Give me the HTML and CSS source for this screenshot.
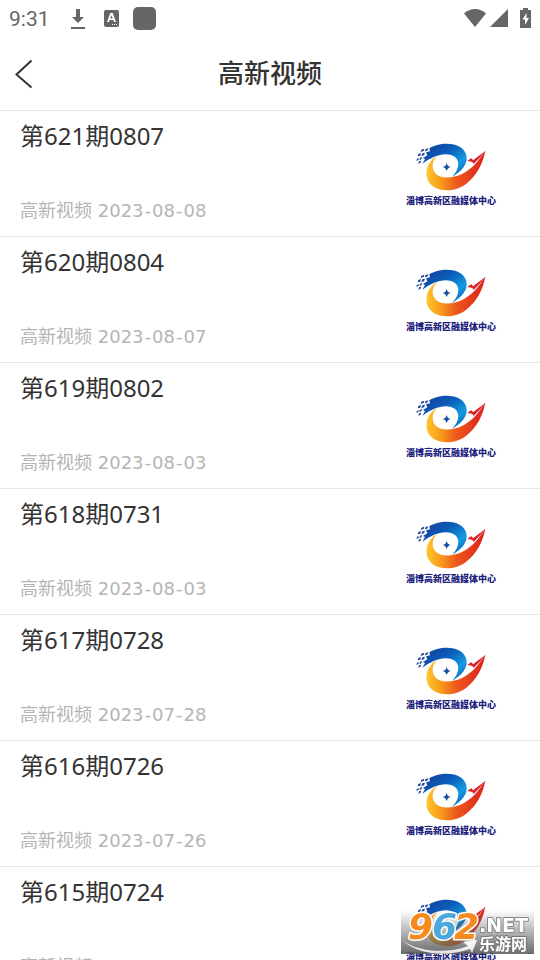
FILE: index.html
```
<!DOCTYPE html>
<html lang="zh-CN">
<head>
  <meta charset="UTF-8">
  <meta name="viewport" content="width=device-width, initial-scale=1.0">
  <title>高新视频</title>
  <link rel="stylesheet" href="styles.css">
</head>
<body>
  <!-- Logo shared by every row -->
  <svg class="defs" aria-hidden="true">
    <defs>
      <linearGradient id="blue" x1="0" y1="0" x2="1" y2="1">
        <stop offset="0" stop-color="#163c9c"/>
        <stop offset=".4" stop-color="#0b5cb8"/>
        <stop offset=".7" stop-color="#129be2"/>
        <stop offset="1" stop-color="#0a4fae"/>
      </linearGradient>
      <linearGradient id="fire" x1="0" y1="0" x2="1" y2="0">
        <stop offset="0" stop-color="#fdc62c"/>
        <stop offset=".25" stop-color="#f99a1c"/>
        <stop offset=".5" stop-color="#ee5a1c"/>
        <stop offset="1" stop-color="#dc1f1c"/>
      </linearGradient>
      <symbol id="logo" viewBox="20 15 210 156">
        <path fill="url(#blue)" d="M60 31C82 16 128 11 152 27C183 47 180 87 129 116C148 96 153 73 138 58C118 40 74 48 39 78L47 63L41 60L54 52L50 43L62 40Z"/>
        <path fill="url(#fire)" d="M84 54C67 68 65 94 80 108C98 124 132 120 158 108C188 94 211 66 228 37C221 78 203 112 170 138C136 164 79 164 59 133C42 104 56 68 84 54Z"/>
        <path fill="#d8232a" d="M174 70Q180 62 187 61L191 67Q208 54 227 40Q212 60 193 78Q190 68 174 70Z"/>
        <path fill="#1c4fa3" d="M112 74Q114 85 124 87Q114 89 112 100Q110 89 100 87Q110 85 112 74Z"/>
        <path fill="#24469c" d="M36 35l9-3-2 7-9 3zM49 33l8-2-3 7-8 2zM27 48l8-3-2 8-8 2zM39 46l8-2-3 8-8 2zM23 62l6-1-2 6-6 1zM32 59l7-2-3 7-6 2zM29 70l7-2-3 7-6 2z"/>
      </symbol>
      <linearGradient id="shade" x1="0" y1="0" x2="0" y2="1">
        <stop offset="0" stop-color="#fff"/>
        <stop offset="1" stop-color="#e2e2e2"/>
      </linearGradient>
    </defs>
  </svg>

  <div class="app">
    <div class="status">
      <span class="clock">9:31</span>
      <svg class="ic-download" viewBox="0 0 16 22"><path d="M6 1h4v8h4l-6 6-6-6h4zM1 19h14v2H1z"/></svg>
      <svg class="ic-lang" viewBox="0 0 15 17"><rect width="15" height="17" rx="2"/><path fill="#fff" d="M6.300 3h2.400L12 12h-2l-.6-2H5.600L5 12H3zM7.500 5.300L6.200 8.500h2.600z"/><path fill="#fff" d="M8 14h1v1H8zM10 14h1v1h-1zM12 14h1v1h-1z"/></svg>
      <span class="app-dot"></span>
      <span class="signals">
        <svg class="ic-wifi" viewBox="0 0 22 18"><path d="M11 18L0 4.500C6-1.500 16-1.500 22 4.500z"/></svg>
        <svg class="ic-cell" viewBox="0 0 18 18"><path d="M18 0v18H0z"/></svg>
        <svg class="ic-battery" viewBox="0 0 11 20"><path d="M3 0h5v2h3v18H0V2h3z"/><path fill="#fff" d="M6.500 5L2.500 11.500H5V17l4-7H6.500z"/></svg>
      </span>
    </div>

    <header class="topbar">
      <button class="back" type="button" aria-label="返回">
        <svg viewBox="0 0 18 30"><path d="M16.500 1.500L1.500 15.500L16.500 28.500"/></svg>
      </button>
      <h1>高新视频</h1>
    </header>

    <main class="list">
      <a class="item" href="#">
        <div class="info">
          <h2>第621期0807</h2>
          <p>高新视频 <time>2023<span>-</span>08<span>-</span>08</time></p>
        </div>
        <div class="thumb"><svg><use href="#logo"/></svg><span>淄博高新区融媒体中心</span></div>
      </a>
      <a class="item" href="#">
        <div class="info">
          <h2>第620期0804</h2>
          <p>高新视频 <time>2023<span>-</span>08<span>-</span>07</time></p>
        </div>
        <div class="thumb"><svg><use href="#logo"/></svg><span>淄博高新区融媒体中心</span></div>
      </a>
      <a class="item" href="#">
        <div class="info">
          <h2>第619期0802</h2>
          <p>高新视频 <time>2023<span>-</span>08<span>-</span>03</time></p>
        </div>
        <div class="thumb"><svg><use href="#logo"/></svg><span>淄博高新区融媒体中心</span></div>
      </a>
      <a class="item" href="#">
        <div class="info">
          <h2>第618期0731</h2>
          <p>高新视频 <time>2023<span>-</span>08<span>-</span>03</time></p>
        </div>
        <div class="thumb"><svg><use href="#logo"/></svg><span>淄博高新区融媒体中心</span></div>
      </a>
      <a class="item" href="#">
        <div class="info">
          <h2>第617期0728</h2>
          <p>高新视频 <time>2023<span>-</span>07<span>-</span>28</time></p>
        </div>
        <div class="thumb"><svg><use href="#logo"/></svg><span>淄博高新区融媒体中心</span></div>
      </a>
      <a class="item" href="#">
        <div class="info">
          <h2>第616期0726</h2>
          <p>高新视频 <time>2023<span>-</span>07<span>-</span>26</time></p>
        </div>
        <div class="thumb"><svg><use href="#logo"/></svg><span>淄博高新区融媒体中心</span></div>
      </a>
      <a class="item" href="#">
        <div class="info">
          <h2>第615期0724</h2>
          <p>高新视频 <time>2023<span>-</span>07<span>-</span>24</time></p>
        </div>
        <div class="thumb"><svg><use href="#logo"/></svg><span>淄博高新区融媒体中心</span></div>
      </a>
    </main>
  </div>

  <!-- Site mark over the list -->
  <svg class="mark" viewBox="0 0 133 44" role="img" aria-label="962.NET 乐游网">
    <path class="swoosh" d="M2 31C18 42 46 44 67 36L62 32L76 30L71 43L69 39C46 47 18 45 2 31Z"/>
    <g class="digits">
      <text x="7" y="29" fill="#f58a1f">9</text>
      <text x="31" y="29" fill="#49a9dc">6</text>
      <text x="53" y="29" fill="#f58a1f">2</text>
    </g>
    <text class="net" x="78" y="22">.NET</text>
    <text class="cn" x="78" y="40">乐游网</text>
  </svg>
</body>
</html>
```
FILE: styles.css
```
* {
  box-sizing: border-box;
}

body {
  margin: 0;
  background: #fff;
  color: #333;
  font-family: "Noto Sans", "Noto Sans CJK SC", sans-serif;
}

h1, h2, p {
  margin: 0;
  font-weight: normal;
}

.defs {
  position: absolute;
  width: 0;
  height: 0;
}

.app {
  display: flex;
  flex-direction: column;
  height: 100vh;
}

/* Status bar */
.status {
  display: flex;
  align-items: center;
  height: 37px;
  padding: 0 9px;
  color: #666;
  fill: #666;
}

.clock {
  width: 61px;
  font: 21px/24px Roboto, sans-serif;
}

.ic-download {
  width: 16px;
  height: 22px;
}

.ic-lang {
  width: 15px;
  height: 17px;
  margin-left: 18px;
}

.app-dot {
  width: 23px;
  height: 23px;
  margin-left: 14px;
  border-radius: 5px;
  background: #666;
}

.signals {
  display: flex;
  align-items: center;
  margin-left: auto;
  padding-bottom: 2px;
}

.ic-wifi {
  width: 22px;
  height: 18px;
}

.ic-cell {
  width: 18px;
  height: 18px;
  margin: 0 12px 0 4px;
}

.ic-battery {
  width: 11px;
  height: 20px;
}

/* Title bar */
.topbar {
  display: grid;
  grid-template-columns: 48px 1fr 48px;
  align-items: center;
  height: 73px;
}

.back {
  display: flex;
  padding: 0 0 0 15px;
  border: 0;
  background: none;
  cursor: pointer;
}

.back svg {
  width: 18px;
  height: 30px;
  fill: none;
  stroke: #333;
  stroke-width: 2;
}

.topbar h1 {
  padding-bottom: 4px;
  font: 500 26px/36px "Noto Sans CJK SC", sans-serif;
  text-align: center;
}

/* List */
.list {
  flex: 1;
  overflow-y: auto;
  scrollbar-width: none;
}

.item {
  display: flex;
  justify-content: space-between;
  height: 126px;
  padding: 8px 44px 10px 20px;
  border-top: 1px solid #e6e6e6;
  color: inherit;
  text-decoration: none;
}

.info {
  display: flex;
  flex-direction: column;
  justify-content: space-between;
}

.info h2 {
  font-size: 24px;
  line-height: 34px;
}

.info p {
  color: #b5b5b5;
  font: 18px/30px "DejaVu Sans", "Noto Sans CJK SC", sans-serif;
}

.info time span {
  padding: 0 1px;
}

.thumb {
  display: flex;
  flex-direction: column;
  align-items: center;
  padding-top: 24px;
}

.thumb svg {
  width: 70px;
  height: 52px;
}

.thumb span {
  color: #20207c;
  font: 900 9px/12px "Noto Sans CJK SC", sans-serif;
}

/* Site mark */
.mark {
  position: fixed;
  right: 6px;
  bottom: 6px;
  width: 133px;
  height: 44px;
  background: linear-gradient(rgba(90, 90, 90, 0), rgba(90, 90, 90, .9));
}

.swoosh {
  fill: url(#shade);
}

.mark text {
  paint-order: stroke;
  stroke-linejoin: round;
}

.digits {
  font: italic bold 36px "DejaVu Sans", sans-serif;
  stroke: #fff;
  stroke-width: 3px;
}

.net {
  fill: #fff;
  stroke: #888;
  stroke-width: 2px;
  font: bold 19px "DejaVu Sans", sans-serif;
}

.cn {
  fill: #fff;
  stroke: #777;
  stroke-width: 2px;
  font: bold 16px "Noto Sans CJK SC", sans-serif;
}
```
